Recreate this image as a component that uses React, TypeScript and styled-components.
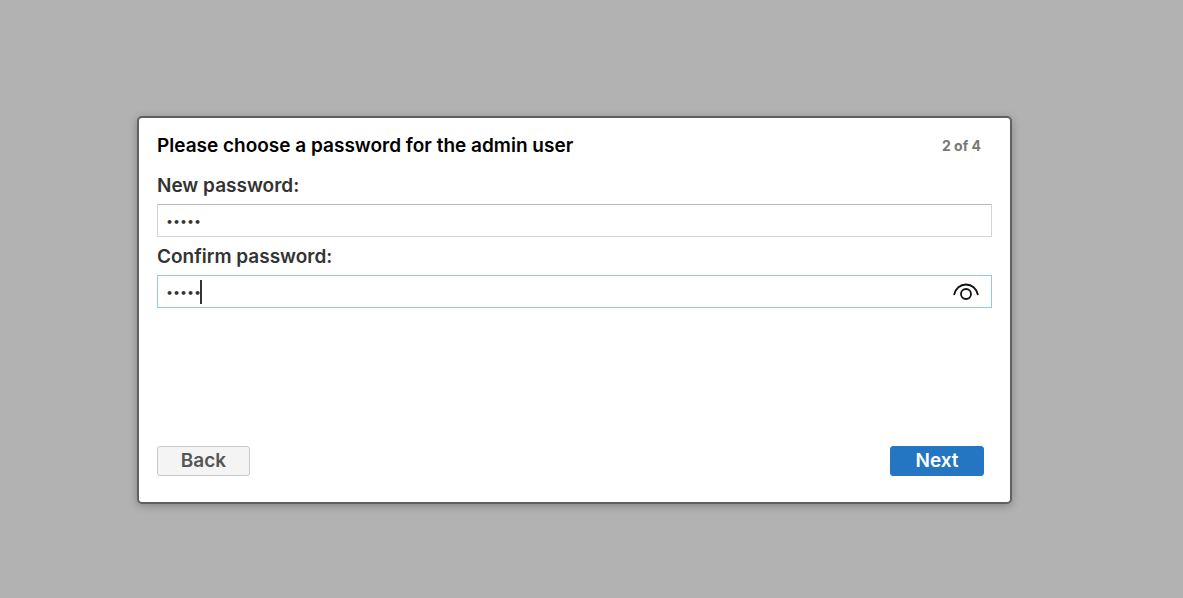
import React, { useState } from "react";
import styled, { createGlobalStyle } from "styled-components";

const GlobalStyle = createGlobalStyle`
  *, *::before, *::after { box-sizing: border-box; }
  body {
    margin: 0;
    background: #b2b2b2;
    font-family: Inter, "Liberation Sans", sans-serif;
    color: #333333;
  }
`;

const Page = styled.main`
  min-height: 100vh;
  padding: 116px 171px 40px 137px;
`;

const Dialog = styled.form`
  display: flex;
  flex-direction: column;
  min-height: 388px;
  padding: 16px 18px 26px;
  background: #ffffff;
  border: 2px solid #606060;
  border-radius: 5px;
  box-shadow: 0 2px 8px rgba(0, 0, 0, 0.25);
`;

const Header = styled.header`
  display: flex;
  align-items: center;
  justify-content: space-between;
  height: 24px;
  margin-bottom: 8px;
  padding-right: 11px;
`;

const Title = styled.h1`
  margin: 0;
  font-size: 19px;
  font-weight: 600;
  line-height: 24px;
  color: #000000;
`;

const Step = styled.span`
  font-size: 14px;
  font-weight: 700;
  line-height: 22px;
  color: #777777;
`;

const Label = styled.label`
  display: block;
  padding: 8px 0 6px;
  font-size: 19px;
  font-weight: 600;
  line-height: 24px;
`;

const InputWrap = styled.div`
  position: relative;
`;

const Input = styled.input<{ $active?: boolean }>`
  display: block;
  width: 100%;
  height: 33px;
  padding: 3px 8px 0;
  border: 1px solid ${(p) => (p.$active ? "#90c8f0" : "#d4d4d4")};
  border-top-color: ${(p) => (p.$active ? "#90c8f0" : "#bbbbbb")};
  border-radius: 0;
  outline: none;
  background: #ffffff;
  font-family: "DejaVu Sans", sans-serif;
  font-size: 11px;
  font-weight: 700;
  color: #333333;
`;

const Caret = styled.span`
  position: absolute;
  top: 5px;
  left: 43px;
  width: 2px;
  height: 24px;
  background: #333333;
`;

const Reveal = styled.button`
  position: absolute;
  top: 4px;
  right: 12px;
  width: 28px;
  height: 24px;
  padding: 0;
  border: 0;
  background: none;
  color: #111111;
`;

const Actions = styled.footer`
  display: flex;
  justify-content: space-between;
  margin-top: auto;
  padding-right: 8px;
`;

const Button = styled.button<{ $primary?: boolean }>`
  width: ${(p) => (p.$primary ? "94px" : "93px")};
  height: 30px;
  padding: 0;
  border: 1px solid ${(p) => (p.$primary ? "#2476c3" : "#c8c8c8")};
  border-radius: 3px;
  background: ${(p) => (p.$primary ? "#2476c3" : "#f4f4f4")};
  color: ${(p) => (p.$primary ? "#ffffff" : "#555555")};
  font-family: inherit;
  font-size: 19px;
  font-weight: 600;
  line-height: 28px;
`;

export default function App() {
  const [password, setPassword] = useState("admin");
  const [confirm, setConfirm] = useState("admin");
  const [visible, setVisible] = useState(false);

  return (
    <>
      <GlobalStyle />
      <Page>
        <Dialog onSubmit={(e: React.FormEvent) => e.preventDefault()}>
          <Header>
            <Title>Please choose a password for the admin user</Title>
            <Step>2 of 4</Step>
          </Header>
          <Label htmlFor="new-password">New password:</Label>
          <Input
            id="new-password"
            type="password"
            value={password}
            onChange={(e) => setPassword(e.target.value)}
          />
          <Label htmlFor="confirm-password">Confirm password:</Label>
          <InputWrap>
            <Input
              id="confirm-password"
              $active
              type={visible ? "text" : "password"}
              value={confirm}
              onChange={(e) => setConfirm(e.target.value)}
            />
            <Caret aria-hidden="true" />
            <Reveal type="button" aria-label="Show password" onClick={() => setVisible(!visible)}>
              <svg width="28" height="24" viewBox="0 0 28 24" fill="none" stroke="currentColor" strokeWidth="1.8">
                <path d="M2 16C3.400 9.300 8.300 5.500 14 5.500S24.600 9.300 26 16" />
                <circle cx="14" cy="15" r="5" />
              </svg>
            </Reveal>
          </InputWrap>
          <Actions>
            <Button type="button">Back</Button>
            <Button type="submit" $primary>Next</Button>
          </Actions>
        </Dialog>
      </Page>
    </>
  );
}
